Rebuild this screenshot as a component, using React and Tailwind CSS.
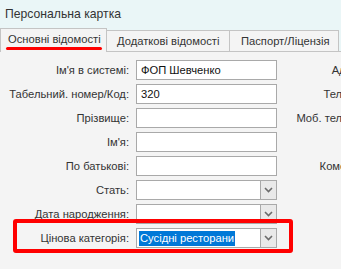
import React from "react";

const font = { fontFamily: '"Liberation Sans", Arial, sans-serif' };

function Chevron() {
  return (
    <svg width="9" height="6" viewBox="0 0 9 6">
      <path d="M1 1 L4.5 4.5 L8 1" fill="none" stroke="#6b6b6b" strokeWidth="1.6" />
    </svg>
  );
}

function Row({ label, right, children }) {
  return (
    <div className="flex items-center h-[20px]">
      <div className="w-[130px] shrink-0 whitespace-nowrap text-right pr-[1px] text-[11.2px] text-[#333]">{label}</div>
      <div className="ml-[6px] w-[141px] shrink-0 h-[20px]">{children}</div>
      <div className="w-[96px] shrink-0 text-right whitespace-nowrap text-[11.2px] text-[#333]">{right}</div>
    </div>
  );
}

function Input({ value }) {
  return (
    <div className="h-[20px] w-full bg-white border border-[#a9a9a9] flex items-center px-[4px] text-[11.2px] text-[#111] whitespace-nowrap">
      {value}
    </div>
  );
}

function Select({ value, selected }) {
  return (
    <div className="h-[20px] w-full bg-white border border-[#a9a9a9] flex items-center text-[11.2px] whitespace-nowrap">
      <div className="flex-1 pl-[2px] flex items-center">
        {value ? (
          <span className={selected ? "bg-[#0078d7] text-white px-[1px] leading-[15px]" : ""}>{value}</span>
        ) : null}
      </div>
      <div className="w-[16px] h-full border-l border-[#a9a9a9] bg-[#e9e9e9] flex items-center justify-center">
        <Chevron />
      </div>
    </div>
  );
}

export default function App() {
  return (
    <div className="relative w-[341px] h-[269px] overflow-hidden bg-[#f4f4f4]" style={font}>
      <div className="h-[29px] bg-[#eaf6f7] pl-[5px] flex items-center text-[12.2px] text-[#333]">
        Персональна картка
      </div>
      <div className="flex items-end h-[23px] bg-[#eaf6f7] border-b border-[#c4c4c4] whitespace-nowrap">
        <div className="relative h-[24px] w-[107px] shrink-0 bg-[#f4f4f4] border border-b-0 border-[#c4c4c4] -mb-[1px] flex items-center pl-[7px] text-[11.2px] text-[#333]">
          <span className="-mt-[3px]">Основні відомості</span>
          <div className="absolute left-[5px] top-[18px] w-[96px] h-[3px] rounded-full bg-[#ff0000]" />
        </div>
        <div className="h-[21px] w-[123px] shrink-0 bg-[#f4f4f4] border border-l-0 border-b-0 border-[#c4c4c4] flex items-center pl-[10px] text-[11.2px] text-[#333]">
          Додаткові відомості
        </div>
        <div className="h-[21px] w-[109px] shrink-0 bg-[#f4f4f4] border border-l-0 border-b-0 border-[#c4c4c4] flex items-center pl-[11px] text-[11.2px] text-[#333]">
          Паспорт/Ліцензія
        </div>
        <div className="h-[21px] w-[40px] shrink-0 bg-[#f4f4f4] border border-l-0 border-b-0 border-[#c4c4c4] ml-[2px]" />
      </div>
      <div className="pt-[8px] flex flex-col gap-[4px]">
        <Row label="Ім'я в системі:" right="Адреса:"><Input value="ФОП Шевченко" /></Row>
        <Row label="Табельний. номер/Код:" right="Телефон:"><Input value="320" /></Row>
        <Row label="Прізвище:" right="Моб. телефон:"><Input value="" /></Row>
        <Row label="Ім'я:" right=""><Input value="" /></Row>
        <Row label="По батькові:" right="Коментар:"><Input value="" /></Row>
        <Row label="Стать:" right=""><Select value="" /></Row>
        <Row label="Дата народження:" right=""><Select value="" /></Row>
        <Row label="Цінова категорія:" right=""><Select value="Сусідні ресторани" selected /></Row>
      </div>
      <div className="absolute left-[13px] top-[219px] w-[280px] h-[34px] border-[4px] border-[#ff0000] rounded-[3px]" />
    </div>
  );
}
